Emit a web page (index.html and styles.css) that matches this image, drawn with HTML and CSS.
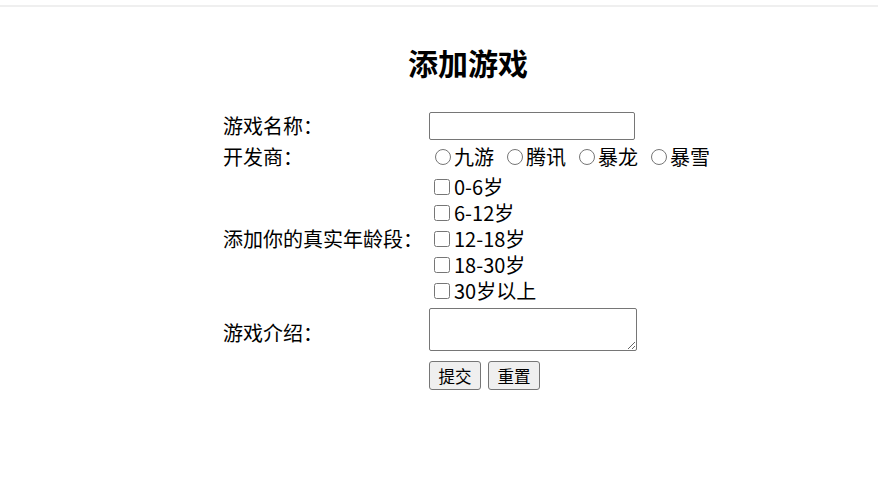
FILE: index.html
```html
<!DOCTYPE html>
<html lang="zh-CN">
<head>
  <meta charset="UTF-8" />
  <meta name="viewport" content="width=device-width, initial-scale=1.0"/>
  <title>添加游戏</title>
  <link rel="stylesheet" href="styles.css">
</head>
<body>
  <div class="topline"></div>

  <div class="wrap">
    <h2>添加游戏</h2>

    <form class="game-form">
      <label class="field-label" for="gameName">游戏名称：</label>
      <div class="field">
        <input type="text" id="gameName" class="text-input" />
      </div>

      <span class="field-label">开发商：</span>
      <div class="field radios">
        <label class="opt"><input type="radio" name="dev" value="九游">九游</label>
        <label class="opt"><input type="radio" name="dev" value="腾讯">腾讯</label>
        <label class="opt"><input type="radio" name="dev" value="暴龙">暴龙</label>
        <label class="opt"><input type="radio" name="dev" value="暴雪">暴雪</label>
      </div>

      <span class="field-label">添加你的真实年龄段：</span>
      <div class="field checks">
        <label class="opt"><input type="checkbox" name="age" value="0-6">0-6岁</label>
        <label class="opt"><input type="checkbox" name="age" value="6-12">6-12岁</label>
        <label class="opt"><input type="checkbox" name="age" value="12-18">12-18岁</label>
        <label class="opt"><input type="checkbox" name="age" value="18-30">18-30岁</label>
        <label class="opt"><input type="checkbox" name="age" value="30+">30岁以上</label>
      </div>

      <label class="field-label" for="gameDesc">游戏介绍：</label>
      <div class="field">
        <textarea id="gameDesc" class="desc"></textarea>
      </div>

      <span></span>
      <div class="field buttons">
        <button type="submit">提交</button>
        <button type="reset">重置</button>
      </div>
    </form>
  </div>
</body>
</html>
```

FILE: styles.css
```css
body {
  margin: 0;
  background: #ffffff;
  color: #000000;
  font-family: "Noto Sans CJK SC", "Noto Sans", sans-serif;
  font-size: 20px;
  line-height: 26px;
}
.topline {
  margin-top: 5px;
  height: 2px;
  background: #efefef;
}
.wrap {
  width: 490px;
  margin-left: 223px;
}
h2 {
  margin: 35px 0 30px;
  font-size: 30px;
  line-height: 40px;
  font-weight: bold;
  text-align: center;
}
.game-form {
  display: grid;
  grid-template-columns: 206px auto;
  row-gap: 4px;
  align-items: center;
}
.field-label {
  white-space: nowrap;
}
.text-input {
  display: block;
  box-sizing: border-box;
  width: 206px;
  height: 28px;
  margin: 0;
  border: 1px solid #767676;
  border-radius: 2px;
  font-size: 17px;
}
.radios {
  display: flex;
  gap: 7px;
}
.checks {
  display: flex;
  flex-direction: column;
}
.opt {
  display: flex;
  align-items: center;
  white-space: nowrap;
}
.opt input {
  width: 16px;
  height: 16px;
  margin: 0 4px 0 5px;
}
.radios .opt input {
  margin: 0 3px 0 6px;
}
.desc {
  display: block;
  box-sizing: border-box;
  width: 208px;
  height: 43px;
  margin: 0 0 6px;
  border: 1px solid #767676;
  border-radius: 2px;
}
.buttons {
  display: flex;
  gap: 7px;
}
button {
  box-sizing: border-box;
  width: 52px;
  height: 29px;
  padding: 0;
  font-family: "Noto Sans CJK SC", sans-serif;
  font-size: 16.5px;
  color: #000000;
  background: #efefef;
  border: 1px solid #767676;
  border-radius: 3px;
}
```
